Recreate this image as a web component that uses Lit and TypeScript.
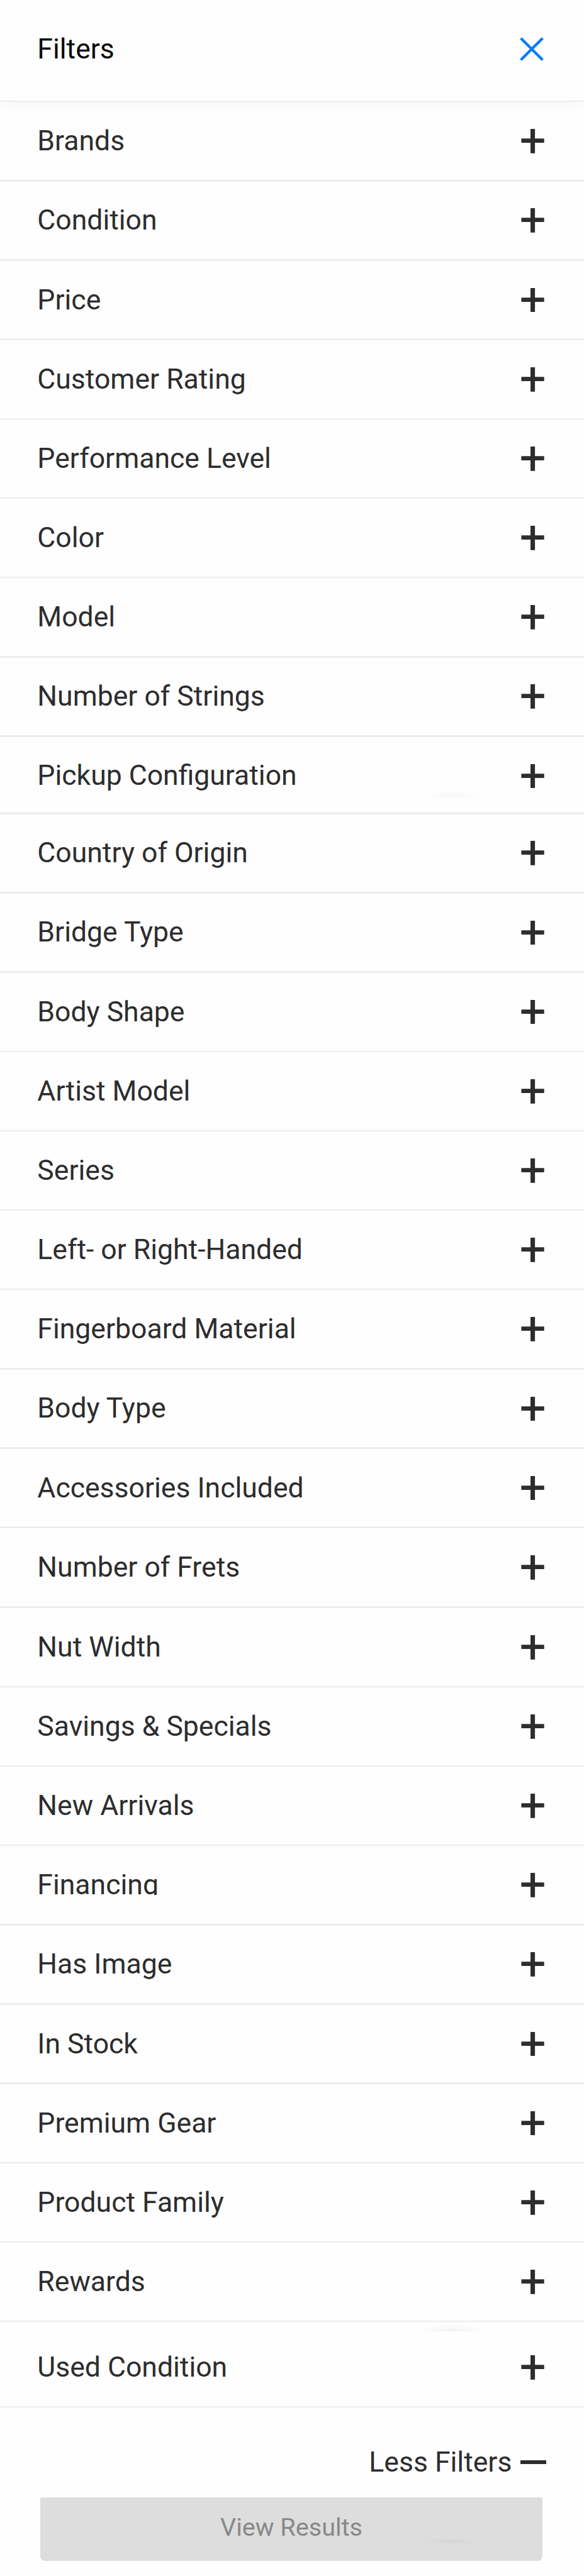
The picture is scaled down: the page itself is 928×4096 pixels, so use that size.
import type { TemplateResult } from 'lit';
import { css, html, LitElement } from 'lit';
import { customElement, property, state } from 'lit/decorators.js';
import { classMap } from 'lit/directives/class-map.js';

interface FilterItem {
  label: string;
  // a few rows differ slightly in height
  variant?: 'short' | 'tall' | 'clipped' | 'loose';
}

const FILTERS: FilterItem[] = [
  { label: 'Brands' },
  { label: 'Condition' },
  { label: 'Price' },
  { label: 'Customer Rating' },
  { label: 'Performance Level' },
  { label: 'Color' },
  { label: 'Model' },
  { label: 'Number of Strings' },
  { label: 'Pickup Configuration', variant: 'short' },
  { label: 'Country of Origin' },
  { label: 'Bridge Type' },
  { label: 'Body Shape' },
  { label: 'Artist Model' },
  { label: 'Series' },
  { label: 'Left- or Right-Handed' },
  { label: 'Fingerboard Material' },
  { label: 'Body Type' },
  { label: 'Accessories Included' },
  { label: 'Number of Frets', variant: 'loose' },
  { label: 'Nut Width' },
  { label: 'Savings & Specials' },
  { label: 'New Arrivals' },
  { label: 'Financing', variant: 'clipped' },
  { label: 'Has Image' },
  { label: 'In Stock' },
  { label: 'Premium Gear' },
  { label: 'Product Family' },
  { label: 'Rewards' },
  { label: 'Used Condition', variant: 'tall' },
];

@customElement('filter-row')
export class FilterRow extends LitElement {
  public static styles = css`
    :host {
      display: block;
    }

    .row {
      position: relative;
      display: flex;
      flex-direction: column;
      height: calc(153 * var(--u));
      box-sizing: border-box;
    }

    .row.short {
      height: calc(149 * var(--u));
    }

    .row.loose {
      height: calc(154 * var(--u));
    }

    .row.tall {
      height: calc(165 * var(--u));
      padding-top: calc(12 * var(--u));
    }

    .content {
      flex: 1;
      display: flex;
      align-items: flex-start;
      justify-content: space-between;
      padding: calc(43.4 * var(--u)) calc(76 * var(--u)) 0 calc(72 * var(--u));
    }

    .label {
      line-height: calc(64 * var(--u));
      white-space: nowrap;
    }

    .clipped .label {
      height: calc(51 * var(--u));
      overflow: hidden;
    }

    .plus {
      display: block;
      width: calc(45 * var(--u));
      height: calc(47 * var(--u));
      margin-top: calc(8.6 * var(--u));
    }

    .line {
      height: calc(3 * var(--u));
      background: #ededed;
    }

    /* faint leftover of the floating button's shadow */
    .shade {
      position: absolute;
      left: calc(805 * var(--u));
      width: calc(132 * var(--u));
      height: calc(14 * var(--u));
      background: radial-gradient(ellipse at bottom, rgba(0, 0, 0, 0.05), transparent 70%);
    }

    .short .shade {
      top: calc(103 * var(--u));
      opacity: 0.5;
    }

    .tall .shade {
      top: calc(4 * var(--u));
    }
  `;

  @property() label = '';
  @property() variant = '';

  public render(): TemplateResult {
    const shaded = this.variant === 'short' || this.variant === 'tall';
    return html`<div
      class=${classMap({
        row: true,
        short: this.variant === 'short',
        tall: this.variant === 'tall',
        loose: this.variant === 'loose',
        clipped: this.variant === 'clipped',
      })}
    >
      <div class="content">
        <span class="label">${this.label}</span>
        <svg class="plus" viewBox="0 0 45 47">
          <path d="M18.2 0h8.6v18.6h17.7v8H26.8V47h-8.6V26.6H.5v-8h17.7z" fill="#2d2d2d" />
        </svg>
      </div>
      ${shaded ? html`<div class="shade"></div>` : ''}
      <div class="line"></div>
    </div>`;
  }
}

@customElement('app-root')
export class AppRoot extends LitElement {
  public static styles = css`
    :host {
      --u: 0.8246px;
      display: block;
      height: 4096px;
      overflow: hidden;
      background: #fefefe;
      color: #2d2d2d;
      font-family: Roboto, 'Liberation Sans', sans-serif;
      font-size: calc(54 * var(--u));
    }

    .header {
      display: flex;
      flex-direction: column;
      height: calc(197 * var(--u));
      color: #0a0a0a;
      box-shadow: 0 calc(12 * var(--u)) calc(24 * var(--u)) calc(-6 * var(--u)) rgba(0, 0, 0, 0.04);
    }

    .bar {
      flex: 1;
      display: flex;
      align-items: flex-start;
      justify-content: space-between;
      padding: calc(63.4 * var(--u)) calc(77.5 * var(--u)) 0 calc(72 * var(--u));
    }

    .title {
      line-height: calc(64 * var(--u));
    }

    .close {
      display: block;
      width: calc(46 * var(--u));
      height: calc(46 * var(--u));
      margin-top: calc(8.6 * var(--u));
    }

    .header-line {
      height: calc(3 * var(--u));
      background: #ededed;
    }

    .less {
      display: flex;
      align-items: center;
      justify-content: flex-end;
      gap: calc(16 * var(--u));
      height: calc(64 * var(--u));
      margin-top: calc(73 * var(--u));
      padding-right: calc(73 * var(--u));
      line-height: calc(64 * var(--u));
    }

    .minus {
      width: calc(50 * var(--u));
      height: calc(6.5 * var(--u));
      background: #2d2d2d;
    }

    .results {
      position: relative;
      height: calc(122 * var(--u));
      margin: calc(36 * var(--u)) calc(80.5 * var(--u)) 0 calc(78 * var(--u));
      border-radius: calc(3 * var(--u)) calc(3 * var(--u)) calc(9 * var(--u)) calc(9 * var(--u));
      background: #ddd;
      color: #888;
      font-size: calc(48 * var(--u));
      line-height: calc(117 * var(--u));
      text-align: center;
    }

    .results-shade {
      position: absolute;
      top: calc(81 * var(--u));
      left: calc(725 * var(--u));
      width: calc(132 * var(--u));
      height: calc(13 * var(--u));
      background: radial-gradient(ellipse at top, rgba(0, 0, 0, 0.035), transparent 70%);
    }
  `;

  @state() private filters = FILTERS;

  public render(): TemplateResult {
    return html`
      <div class="header">
        <div class="bar">
          <span class="title">Filters</span>
          <svg class="close" viewBox="0 0 46 46">
            <path d="M2 2l42 42M44 2L2 44" stroke="#007bff" stroke-width="5.2" />
          </svg>
        </div>
        <div class="header-line"></div>
      </div>
      ${this.filters.map(
        item => html`<filter-row .label=${item.label} .variant=${item.variant || ''}></filter-row>`,
      )}
      <div class="less">
        <span>Less Filters</span>
        <div class="minus"></div>
      </div>
      <div class="results">
        View Results
        <div class="results-shade"></div>
      </div>
    `;
  }
}

declare global {
  interface HTMLElementTagNameMap {
    'filter-row': FilterRow;
    'app-root': AppRoot;
  }
}
